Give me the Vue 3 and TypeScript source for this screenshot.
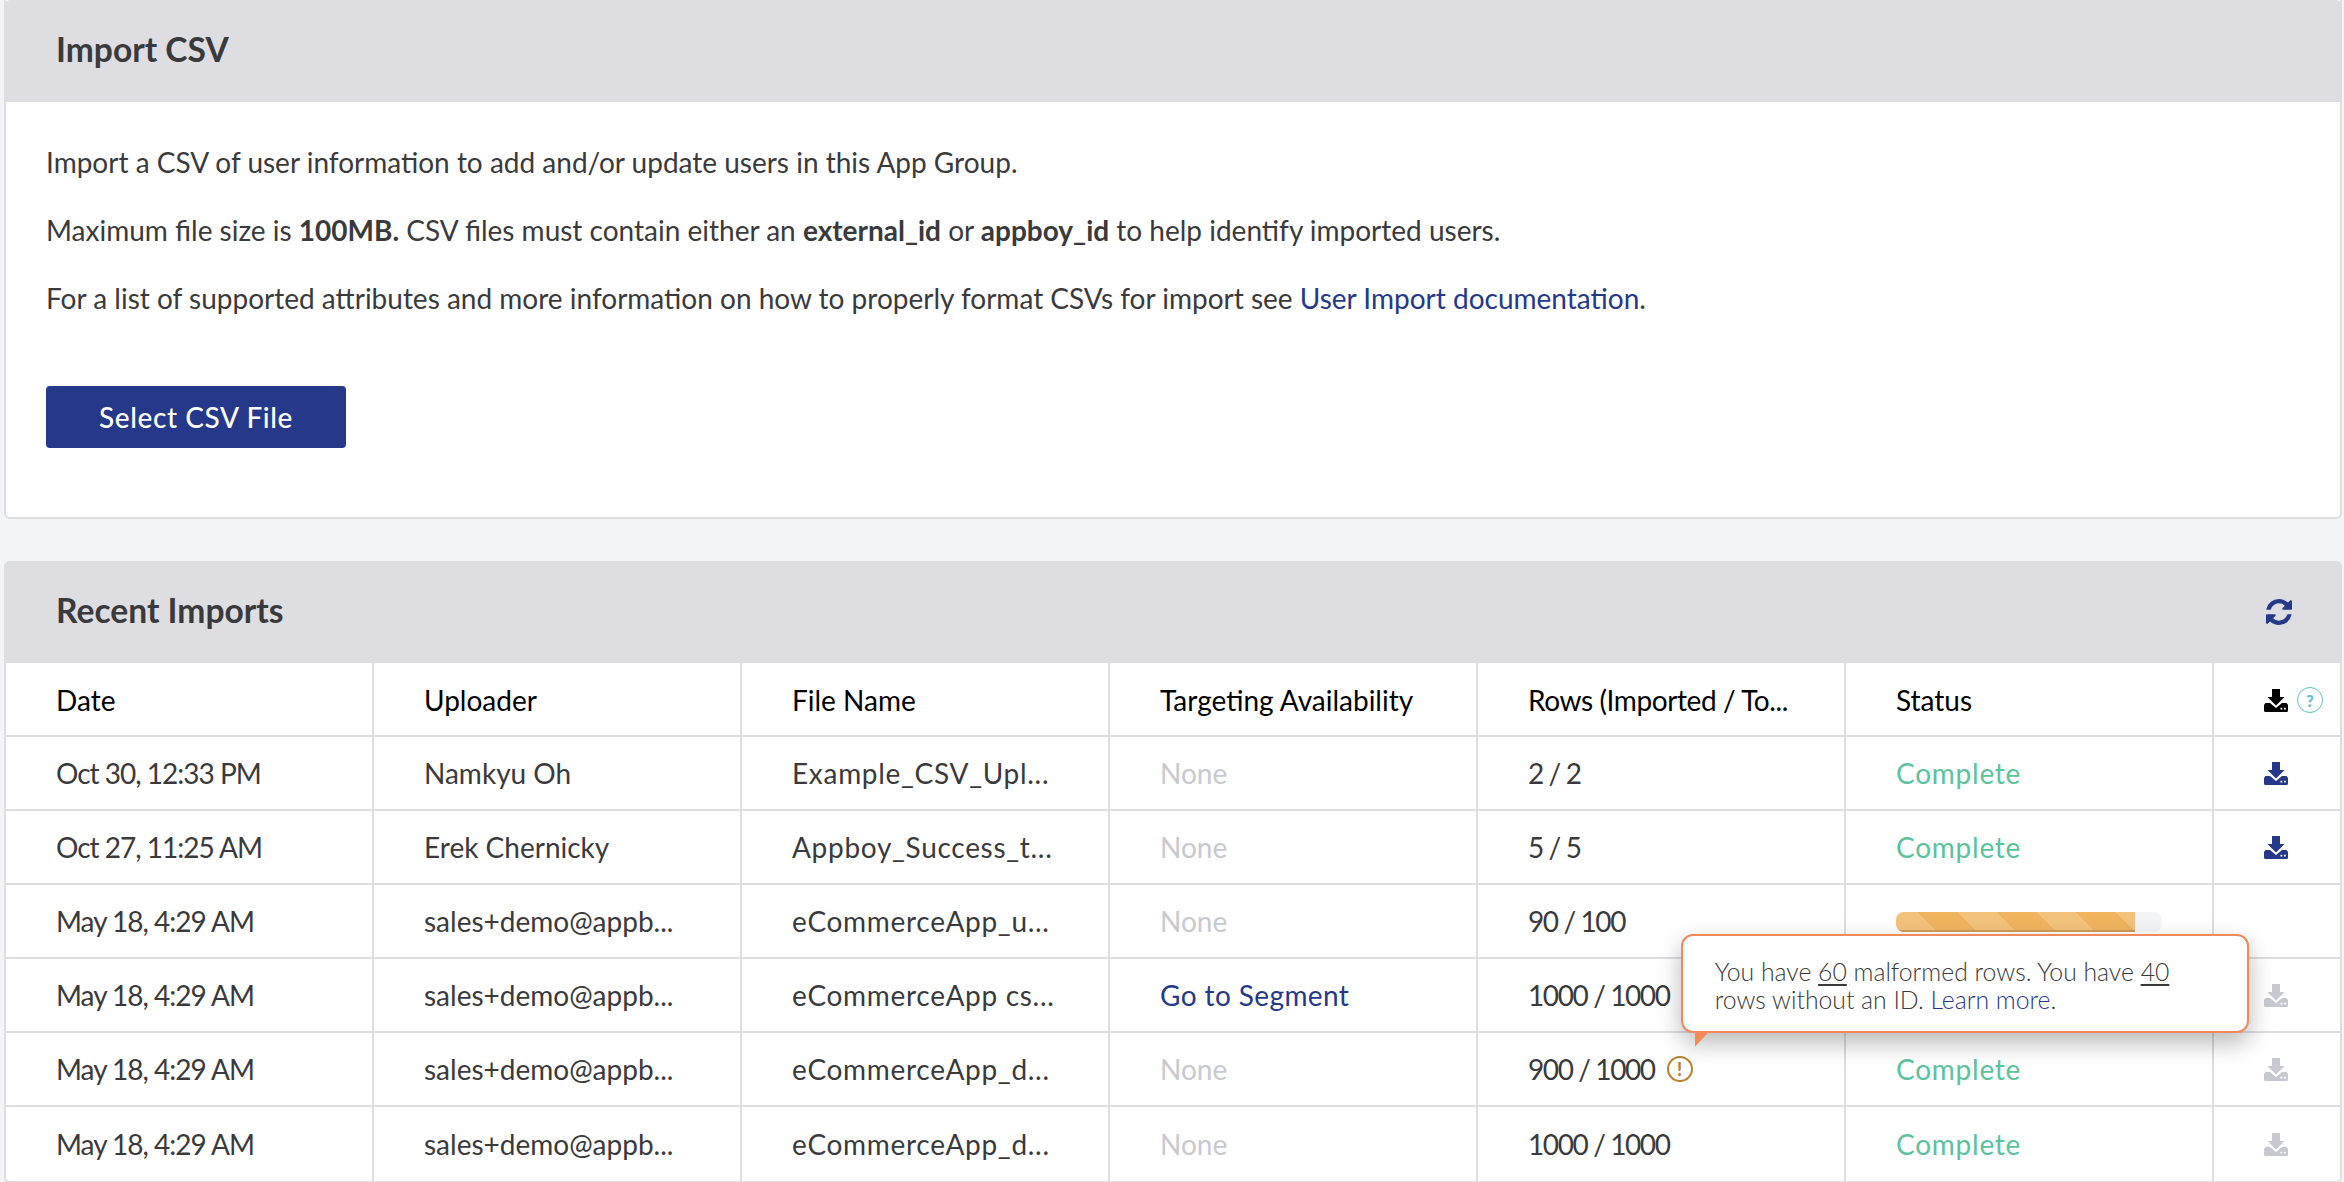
<template>
  <div class="page">
    <section class="panel import-panel">
      <header class="panel-head"><h2>Import CSV</h2></header>
      <div class="import-body">
        <p>Import a CSV of user information to add and/or update users in this App Group.</p>
        <p>Maximum file size is <b>100MB.</b> CSV files must contain either an <b>external_id</b> or <b>appboy_id</b> to help identify imported users.</p>
        <p>For a list of supported attributes and more information on how to properly format CSVs for import see <a href="#">User Import documentation</a>.</p>
        <button class="primary" type="button">Select CSV File</button>
      </div>
    </section>

    <section class="panel imports-panel">
      <header class="panel-head">
        <h2>Recent Imports</h2>
        <svg class="refresh" viewBox="128 128 1536 1536" aria-hidden="true">
          <path d="M1639 1056q0 5-1 7-64 268-268 434.5t-478 166.5q-146 0-282.5-55t-243.5-157l-129 129q-19 19-45 19t-45-19-19-45v-448q0-26 19-45t45-19h448q26 0 45 19t19 45-19 45l-137 137q71 66 161 102t187 36q134 0 250-65t186-179q11-17 53-117 8-23 30-23h192q13 0 22.5 9.5t9.5 22.5zm25-800v448q0 26-19 45t-45 19h-448q-26 0-45-19t-19-45 19-45l138-138q-148-137-349-137-134 0-250 65t-186 179q-11 17-53 117-8 23-30 23h-199q-13 0-22.5-9.5t-9.5-22.5v-7q65-268 270-434.5t480-166.5q146 0 284 55.5t245 156.5l130-129q19-19 45-19t45 19 19 45z" />
        </svg>
      </header>

      <div class="row head-row">
        <div v-for="col in columns" :key="col" class="cell">{{ col }}</div>
        <div class="cell action">
          <svg class="dl black" viewBox="0 0 24 23" aria-hidden="true">
            <path d="M8 0h8v8h4.500L12 16.500 3.500 8H8z" />
            <path fill-rule="evenodd" d="M1.500 14H6l6 5 6-5h4.500L24 16v5.500a1.500 1.500 0 0 1-1.500 1.500h-21A1.500 1.500 0 0 1 0 21.500V16zM16.500 18.800v1.800h1.800v-1.800zM20 18.800v1.800h1.800v-1.800z" />
          </svg>
          <span class="help">?</span>
        </div>
      </div>

      <div v-for="(r, i) in rows" :key="i" class="row">
        <div class="cell date">{{ r.date }}</div>
        <div class="cell">{{ r.uploader }}</div>
        <div class="cell file">{{ r.file }}</div>
        <div class="cell">
          <a v-if="r.segment" class="segment" href="#">Go to Segment</a>
          <span v-else class="none">None</span>
        </div>
        <div class="cell">
          <span class="count">{{ r.count }}</span>
          <span v-if="r.warn" class="warn">
            !
            <span class="tooltip">
              You have <u>60</u> malformed rows. You have <u>40</u><br />
              rows without an ID. <a href="#">Learn more</a>.
            </span>
          </span>
        </div>
        <div class="cell">
          <div v-if="r.progress" class="bar"><div class="bar-fill" :style="{ width: r.progress + '%' }"></div></div>
          <span v-else class="done">Complete</span>
        </div>
        <div class="cell action">
          <svg v-if="r.icon" class="dl" :class="r.icon" viewBox="0 0 24 23" aria-hidden="true">
            <path d="M8 0h8v8h4.500L12 16.500 3.500 8H8z" />
            <path fill-rule="evenodd" d="M1.500 14H6l6 5 6-5h4.500L24 16v5.500a1.500 1.500 0 0 1-1.500 1.500h-21A1.500 1.500 0 0 1 0 21.500V16zM16.500 18.800v1.800h1.800v-1.800zM20 18.800v1.800h1.800v-1.800z" />
          </svg>
        </div>
      </div>
    </section>
  </div>
</template>

<script setup lang="ts">
interface ImportRow {
  date: string;
  uploader: string;
  file: string;
  count: string;
  segment?: boolean;
  warn?: boolean;
  progress?: number;
  icon?: string;
}

const columns = ['Date', 'Uploader', 'File Name', 'Targeting Availability', 'Rows (Imported / To...', 'Status'];

const demo = 'sales+demo@appb...';

const rows: ImportRow[] = [
  { date: 'Oct 30, 12:33 PM', uploader: 'Namkyu Oh', file: 'Example_CSV_Upl...', count: '2 / 2', icon: 'blue' },
  { date: 'Oct 27, 11:25 AM', uploader: 'Erek Chernicky', file: 'Appboy_Success_t...', count: '5 / 5', icon: 'blue' },
  { date: 'May 18, 4:29 AM', uploader: demo, file: 'eCommerceApp_u...', count: '90 / 100', progress: 90 },
  { date: 'May 18, 4:29 AM', uploader: demo, file: 'eCommerceApp cs...', count: '1000 / 1000', segment: true, icon: 'grey' },
  { date: 'May 18, 4:29 AM', uploader: demo, file: 'eCommerceApp_d...', count: '900 / 1000', warn: true, icon: 'grey' },
  { date: 'May 18, 4:29 AM', uploader: demo, file: 'eCommerceApp_d...', count: '1000 / 1000', icon: 'grey' },
];
</script>

<style>
html,
body {
  margin: 0;
  background: #f3f4f6;
}
</style>

<style scoped>
.page {
  width: 2344px;
  height: 1182px;
  overflow: hidden;
  box-sizing: border-box;
  padding: 0 2px 0 4px;
  font-family: Lato, "Open Sans", sans-serif;
  font-size: 28px;
  color: #3a3a3c;
}

.panel {
  background: #fff;
  border: 2px solid #dddde2;
  border-top: 0;
  border-radius: 0 0 6px 6px;
}

.imports-panel {
  margin-top: 42px;
  border-radius: 6px;
}

.panel-head {
  height: 102px;
  box-sizing: border-box;
  margin: 0 -2px;
  padding: 0 50px 4px 52px;
  display: flex;
  align-items: center;
  justify-content: space-between;
  background: #dddde2;
  border-radius: 6px 6px 0 0;
}

.panel-head h2 {
  margin: 0;
  font-size: 33.6px;
  font-weight: 700;
  color: #3a3a3c;
}

.refresh {
  width: 26px;
  height: 26px;
  margin-top: 3px;
  fill: #26388a;
}

.import-body {
  height: 415px;
  box-sizing: border-box;
  padding: 40px 40px 0;
}

.import-body p {
  margin: 0 0 28px;
  line-height: 40px;
}

.import-body b {
  font-weight: 700;
}

a {
  color: #26388a;
  text-decoration: none;
}

.primary {
  display: block;
  width: 300px;
  height: 62px;
  margin-top: 68px;
  border: 0;
  border-radius: 4px;
  background: #26388a;
  color: #fff;
  font: 500 28px Lato, "Open Sans", sans-serif;
  letter-spacing: 0.6px;
}

.row {
  display: grid;
  grid-template-columns: repeat(6, 368px) 1fr;
  height: 74px;
  box-sizing: border-box;
  border-bottom: 2px solid #dddde2;
}

.row:last-child {
  border-bottom: 0;
}

.head-row {
  color: #000;
}

.head-row .cell {
  padding-top: 2px;
}

.head-row .cell:nth-child(5) {
  letter-spacing: -0.4px;
}

.cell {
  display: flex;
  align-items: center;
  gap: 12px;
  padding-left: 50px;
  border-right: 2px solid #dddde2;
  white-space: nowrap;
}

.cell.action {
  padding-left: 50px;
  border-right: 0;
  gap: 9px;
}

.date {
  letter-spacing: -1px;
}

.file {
  letter-spacing: 0.7px;
}

.count {
  letter-spacing: -1.4px;
}

.segment {
  letter-spacing: 0.4px;
}

.none {
  color: #c8c9ce;
}

.done {
  color: #5cc29c;
  letter-spacing: 0.75px;
}

.dl {
  width: 24px;
  height: 23px;
  flex: none;
}

.dl.black {
  fill: #000;
}

.dl.blue {
  fill: #26388a;
}

.dl.grey {
  fill: #c8c8d0;
}

.help {
  width: 24px;
  height: 24px;
  border: 1px solid #5fc4c8;
  border-radius: 50%;
  display: flex;
  align-items: center;
  justify-content: center;
  font-size: 17px;
  font-weight: 900;
  color: #5fc4c8;
}

.warn {
  position: relative;
  width: 22px;
  height: 22px;
  border: 2px solid #b9812c;
  border-radius: 50%;
  display: flex;
  align-items: center;
  justify-content: center;
  font-size: 18px;
  font-weight: 900;
  letter-spacing: 0;
  color: #b9812c;
}

.tooltip {
  position: absolute;
  z-index: 5;
  left: 12px;
  bottom: 47px;
  width: 568px;
  height: 99px;
  box-sizing: border-box;
  padding: 22px 32px 0;
  background: #fff;
  border: 2px solid #f08a5a;
  border-radius: 12px;
  box-shadow: 0 10px 24px rgba(0, 0, 0, 0.28);
  font-size: 24.75px;
  font-weight: 300;
  line-height: 28px;
  color: #3a3a3c;
}

.tooltip::after {
  content: "";
  position: absolute;
  left: 12px;
  bottom: -16px;
  width: 14px;
  height: 15px;
  background: #f08a5a;
  clip-path: polygon(0 0, 100% 0, 0 100%);
}

.tooltip u {
  text-underline-offset: 3px;
}

.bar {
  width: 266px;
  height: 20px;
  margin-top: 2px;
  border-radius: 8px;
  background: #f3f4f6;
  overflow: hidden;
}

.bar-fill {
  height: 100%;
  box-sizing: border-box;
  border-bottom: 2px solid #cf9d57;
  background: repeating-linear-gradient(45deg, #f3c27c 0 28px, #f0b45f 28px 56px);
}
</style>
